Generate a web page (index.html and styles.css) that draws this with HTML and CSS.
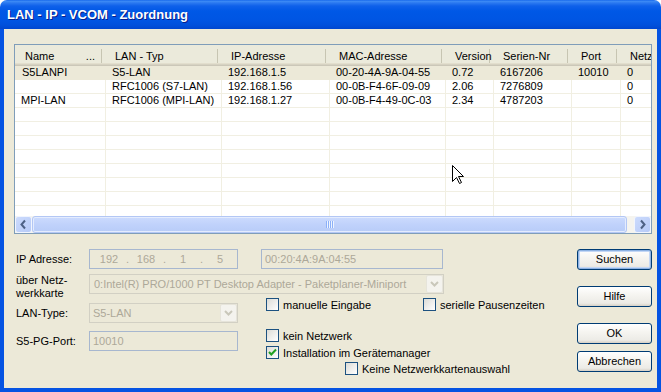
FILE: index.html
```html
<!DOCTYPE html>
<html>
<head>
<meta charset="utf-8">
<title>LAN - IP - VCOM - Zuordnung</title>
<link rel="stylesheet" href="styles.css">
</head>
<body>
<div class="window">
  <div class="titlebar"><span class="title">LAN - IP - VCOM - Zuordnung</span></div>
  <div class="frame">
    <div class="list">
      <div class="lv-head">
        <div class="hc first"><span>Name</span><span>...</span></div>
        <div class="hc">LAN - Typ</div>
        <div class="hc">IP-Adresse</div>
        <div class="hc">MAC-Adresse</div>
        <div class="hc">Version</div>
        <div class="hc">Serien-Nr</div>
        <div class="hc">Port</div>
        <div class="hc">Netz</div>
      </div>
      <div class="lv-body">
        <div class="row sel"><div class="cell">S5LANPI</div><div class="cell">S5-LAN</div><div class="cell">192.168.1.5</div><div class="cell">00-20-4A-9A-04-55</div><div class="cell">0.72</div><div class="cell">6167206</div><div class="cell">10010</div><div class="cell">0</div></div>
        <div class="row"><div class="cell"></div><div class="cell">RFC1006 (S7-LAN)</div><div class="cell">192.168.1.56</div><div class="cell">00-0B-F4-6F-09-09</div><div class="cell">2.06</div><div class="cell">7276809</div><div class="cell"></div><div class="cell">0</div></div>
        <div class="row"><div class="cell">MPI-LAN</div><div class="cell">RFC1006 (MPI-LAN)</div><div class="cell">192.168.1.27</div><div class="cell">00-0B-F4-49-0C-03</div><div class="cell">2.34</div><div class="cell">4787203</div><div class="cell"></div><div class="cell">0</div></div>
        <div class="row"><div class="cell"></div><div class="cell"></div><div class="cell"></div><div class="cell"></div><div class="cell"></div><div class="cell"></div><div class="cell"></div><div class="cell"></div></div>
        <div class="row"><div class="cell"></div><div class="cell"></div><div class="cell"></div><div class="cell"></div><div class="cell"></div><div class="cell"></div><div class="cell"></div><div class="cell"></div></div>
        <div class="row"><div class="cell"></div><div class="cell"></div><div class="cell"></div><div class="cell"></div><div class="cell"></div><div class="cell"></div><div class="cell"></div><div class="cell"></div></div>
        <div class="row"><div class="cell"></div><div class="cell"></div><div class="cell"></div><div class="cell"></div><div class="cell"></div><div class="cell"></div><div class="cell"></div><div class="cell"></div></div>
        <div class="row"><div class="cell"></div><div class="cell"></div><div class="cell"></div><div class="cell"></div><div class="cell"></div><div class="cell"></div><div class="cell"></div><div class="cell"></div></div>
        <div class="row"><div class="cell"></div><div class="cell"></div><div class="cell"></div><div class="cell"></div><div class="cell"></div><div class="cell"></div><div class="cell"></div><div class="cell"></div></div>
        <div class="row"><div class="cell"></div><div class="cell"></div><div class="cell"></div><div class="cell"></div><div class="cell"></div><div class="cell"></div><div class="cell"></div><div class="cell"></div></div>
        <div class="row"><div class="cell"></div><div class="cell"></div><div class="cell"></div><div class="cell"></div><div class="cell"></div><div class="cell"></div><div class="cell"></div><div class="cell"></div></div>
      </div>
      <div class="hscroll">
        <div class="sb-btn"><svg width="15" height="15" viewBox="0 0 15 15"><polyline points="9,3.5 5.5,7.5 9,11.5" fill="none" stroke="#4D6185" stroke-width="2"/></svg></div>
        <div class="sb-thumb"><div class="grip"><i></i><i></i><i></i><i></i></div></div>
        <div class="sb-track"></div>
        <div class="sb-btn"><svg width="15" height="15" viewBox="0 0 15 15"><polyline points="6,3.5 9.5,7.5 6,11.5" fill="none" stroke="#4D6185" stroke-width="2"/></svg></div>
      </div>
    </div>

    <div class="bottom">
      <div class="form">
        <div class="frow">
          <div class="lbl">IP Adresse:</div>
          <div class="edit ip w149"><span class="seg">192</span><span class="dot">.</span><span class="seg">168</span><span class="dot">.</span><span class="seg">1</span><span class="dot">.</span><span class="seg">5</span></div>
          <div class="edit mac">00:20:4A:9A:04:55</div>
        </div>
        <div class="frow rowb">
          <div class="lbl two">über Netz-<br>werkkarte</div>
          <div class="combo wide"><span class="ctext">0:Intel(R) PRO/1000 PT Desktop Adapter - Paketplaner-Miniport</span><span class="dd"><svg width="15" height="16" viewBox="0 0 15 16"><polyline points="4,6 7.5,9.5 11,6" fill="none" stroke="#C9C7BA" stroke-width="2"/></svg></span></div>
        </div>
        <div class="frow rowc">
          <div class="lbl">LAN-Type:</div>
          <div class="combo w149"><span class="ctext">S5-LAN</span><span class="dd"><svg width="15" height="16" viewBox="0 0 15 16"><polyline points="4,6 7.5,9.5 11,6" fill="none" stroke="#C9C7BA" stroke-width="2"/></svg></span></div>
          <div class="checks-c">
            <label class="chk first-chk"><span class="box"></span><span>manuelle Eingabe</span></label>
            <label class="chk"><span class="box"></span><span>serielle Pausenzeiten</span></label>
          </div>
        </div>
        <div class="frow rowd">
          <div class="lbl">S5-PG-Port:</div>
          <div class="edit w149">10010</div>
          <div class="checks-d">
            <label class="chk"><span class="box"></span><span>kein Netzwerk</span></label>
            <label class="chk c2"><span class="box"><svg width="11" height="11" viewBox="0 0 11 11"><polyline points="2,5 4.3,7.5 9,2.5" fill="none" stroke="#21A121" stroke-width="2"/></svg></span><span>Installation im Gerätemanager</span></label>
            <label class="chk c3"><span class="box"></span><span>Keine Netzwerkkartenauswahl</span></label>
          </div>
        </div>
      </div>
      <div class="buttons">
        <div class="btn default">Suchen</div>
        <div class="btn b2">Hilfe</div>
        <div class="btn b3">OK</div>
        <div class="btn b4">Abbrechen</div>
      </div>
    </div>
  </div>
  <svg class="cursor" width="13" height="20" viewBox="0 0 13 20"><path d="M0.5 0.5 V16.5 L4.5 12.5 L7.5 18.5 L9.5 17.5 L6.5 11.5 H11.5 Z" fill="#fff" stroke="#000" stroke-width="1" stroke-linejoin="miter"/></svg>
</div>
</body>
</html>
```

FILE: styles.css
```css
* { box-sizing: border-box; }
html, body { margin: 0; padding: 0; background: #ffffff; }
body {
  width: 661px; height: 392px; overflow: hidden;
  font-family: "Liberation Sans", Arial, sans-serif;
  font-size: 11px; color: #000;
}
.window {
  position: relative;
  width: 661px; height: 392px;
  display: flex; flex-direction: column;
}
.titlebar {
  flex: none; height: 29px;
  border-radius: 7px 7px 0 0;
  background: linear-gradient(to bottom, #0A5CE8 0px, #3F8DF6 1px, #2A78F0 3px, #0E60EA 6px, #0058E6 11px, #0055E3 20px, #0050DC 25px, #0046CF 29px);
  display: flex; align-items: center;
  padding-left: 7px;
}
.title {
  color: #fff; font-weight: bold; font-size: 13px;
  text-shadow: 1px 1px 0 #0A1E8A;
}
.frame {
  flex: 1;
  background: #ECE9D8;
  border: solid #0553E2;
  border-width: 0 4px 4px 4px;
  padding: 15px 5px 0 10px;
  display: flex; flex-direction: column;
}
.list {
  flex: none;
  width: 638px; height: 190px;
  border: 1px solid #7F9DB9;
  background: #fff;
  display: flex; flex-direction: column;
  overflow: hidden;
}
.lv-head, .row {
  display: grid;
  grid-template-columns: 91px 116px 108px 116px 48px 78px 49px 60px;
  width: 666px;
}
.lv-head {
  flex: none; height: 21px;
  background: #EBEADB;
  box-shadow: inset 0 -1px 0 #CBC7B8, inset 0 -2px 0 #D6D2C2, inset 0 -3px 0 #E2DECD;
}
.hc {
  padding: 4px 0 0 9px;
  line-height: 14px;
  white-space: nowrap; overflow: hidden;
  background: linear-gradient(#C7C5B2, #C7C5B2) right 4px top 4px / 1px 14px no-repeat;
}
.hc.first {
  padding-left: 10px; padding-right: 11px;
  display: flex; justify-content: space-between;
}
.lv-body { flex: 1; overflow: hidden; }
.row { height: 14px; }
.row.sel { background: #ECE9D8; }
.cell {
  height: 14px;
  border-right: 1px solid #F1EFE2;
  border-bottom: 1px solid #F1EFE2;
  padding-left: 6px;
  line-height: 13px;
  white-space: nowrap; overflow: hidden;
}
.row.sel .cell { border-color: #ECE9D8; }
.row.sel .cell:first-child { padding-left: 7px; }

.hscroll {
  flex: none; height: 17px;
  display: flex;
  background: #F5F4EF;
}
.sb-btn {
  flex: none; width: 17px; height: 17px;
  border: 1px solid #F1F5FE;
  border-radius: 3px;
  background: linear-gradient(135deg, #CCDBFD, #B6CAF7);
  display: flex; align-items: center; justify-content: center;
}
.sb-thumb {
  flex: none; width: 595px; height: 17px;
  border: 1px solid #B3C7F5;
  border-radius: 3px;
  background: linear-gradient(to bottom, #CCDBFE, #C0D2FB 50%, #B8CCF8);
  box-shadow: inset 0 0 0 1px #E4ECFE;
  display: flex; align-items: center; justify-content: center;
}
.grip { display: flex; gap: 1px; }
.grip i { display: block; width: 1px; height: 7px; background: #8CB0F8; box-shadow: 1px 0 0 #EEF4FE; }
.sb-track { flex: 1; }

.bottom {
  flex: 1;
  margin-top: 15px;
  display: flex;
}
.form { flex: 1; margin-left: 2px; }
.frow { display: flex; align-items: center; height: 20px; }
.lbl { flex: none; width: 73px; line-height: 20px; white-space: nowrap; }
.lbl.two { line-height: 13px; }
.rowb { margin-top: 5px; height: 26px; align-items: flex-start; }
.rowc { margin-top: 3px; align-items: flex-start; }
.rowd { margin-top: 8px; align-items: flex-start; }

.edit {
  flex: none; height: 20px;
  border: 1px solid #A7B7CF;
  background: #ECE9D8;
  color: #ACA899;
  padding-left: 3px;
  line-height: 18px;
  white-space: nowrap; overflow: hidden;
}
.w149 { width: 149px; }
.mac { width: 182px; margin-left: 23px; }
.ip { display: flex; padding-left: 4px; }
.ip .seg { width: 30px; text-align: center; }
.ip .dot { width: 7px; text-align: center; }

.combo {
  flex: none; height: 20px;
  border: 1px solid #D2D0C4;
  background: #ECE9D8;
  color: #ACA899;
  display: flex; align-items: stretch;
}
.combo.wide { width: 355px; }
.ctext { flex: 1; padding-left: 3px; line-height: 18px; white-space: nowrap; overflow: hidden; }
.combo.wide .ctext { padding-left: 4px; }
.dd {
  flex: none; width: 17px;
  margin: 0;
  border: 1px solid #E6E4DA;
  border-radius: 2px;
  background: #F4F3EE;
  display: flex; align-items: center; justify-content: center;
}

.checks-c { display: flex; margin-left: 28px; margin-top: -5px; }
.checks-d { display: flex; flex-direction: column; margin-left: 28px; margin-top: -2px; }
.chk { display: flex; align-items: center; height: 13px; gap: 4px; white-space: nowrap; }
.first-chk { width: 157px; }
.chk.c2 { margin-top: 4px; }
.chk.c3 { margin-top: 3px; margin-left: 79px; }
.box {
  flex: none; width: 13px; height: 13px;
  border: 1px solid #1C5180;
  background: linear-gradient(135deg, #DCDCD7, #FFFFFF);
  display: flex; align-items: center; justify-content: center;
}

.buttons { flex: none; width: 75px; display: flex; flex-direction: column; }
.btn {
  height: 21px;
  border: 1px solid #003C74;
  border-radius: 3px;
  background: linear-gradient(to bottom, #FFFFFF 0%, #F6F5F1 40%, #ECEBE6 85%, #D6D0C5 100%);
  text-align: center;
  line-height: 19px;
}
.btn.default { box-shadow: inset 0 0 0 1px #8DB2E3, inset 0 0 0 2px #C3D7F5; }
.btn.b2 { margin-top: 16px; }
.btn.b3 { margin-top: 16px; }
.btn.b4 { margin-top: 7px; }

.cursor { position: absolute; left: 452px; top: 165px; }
```
